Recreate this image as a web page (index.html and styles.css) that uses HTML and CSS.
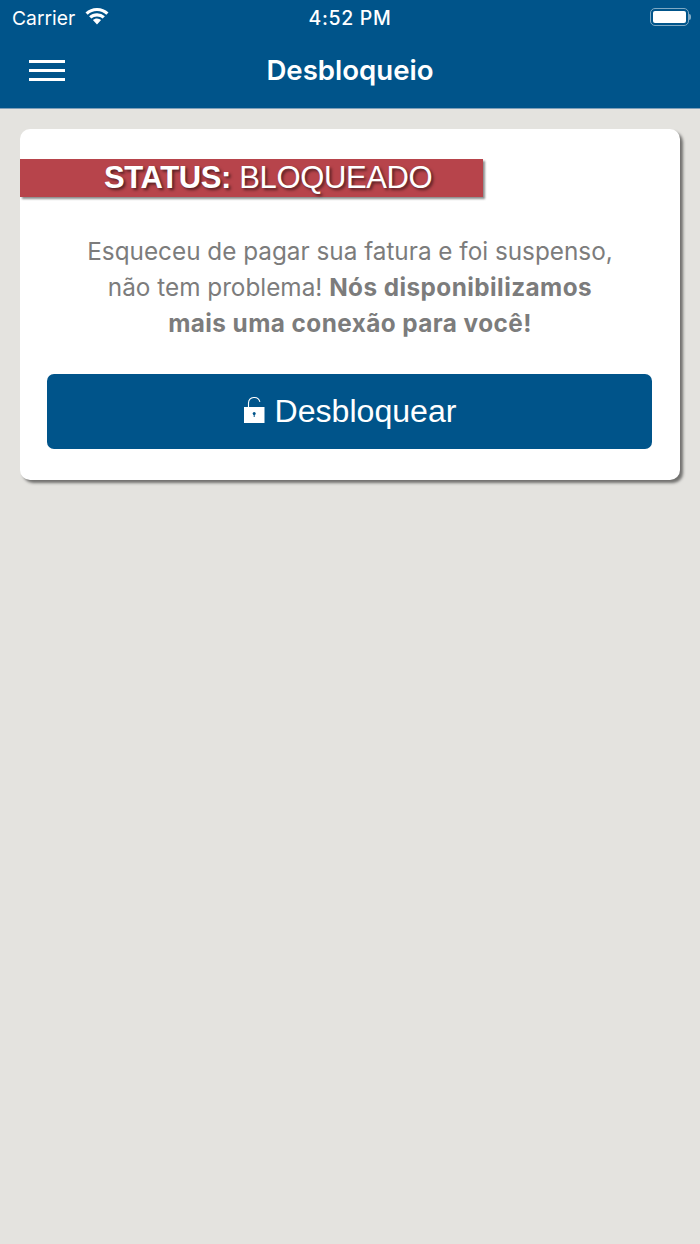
FILE: index.html
```html
<!DOCTYPE html>
<html lang="pt-BR">
<head>
<meta charset="utf-8">
<title>Desbloqueio</title>
<link rel="stylesheet" href="styles.css">
</head>
<body>
<header class="header">
  <div class="statusbar">
    <div class="status-left">
      <span class="carrier">Carrier</span>
      <svg class="wifi" width="26" height="19" viewBox="0 0 26 18"><path d="M13 3.600c3.600 0 6.900 1.400 9.300 3.700l2.200-2.300A16.500 16.500 0 0 0 13 .4 16.500 16.500 0 0 0 1.500 5l2.200 2.300A13.400 13.400 0 0 1 13 3.600z" fill="#fff"/><path d="M13 8.900c2.200 0 4.200.8 5.700 2.200l2.200-2.300A11.500 11.500 0 0 0 13 5.700c-3 0-5.800 1.200-7.900 3.100l2.200 2.300A8.400 8.400 0 0 1 13 8.900z" fill="#fff"/><path d="M13 11c-1.600 0-3 .6-4.100 1.500L13 17l4.100-4.500A6.300 6.300 0 0 0 13 11z" fill="#fff"/></svg>
    </div>
    <span class="clock">4:52 PM</span>
    <div class="battery"><span class="battery-fill"></span></div>
    <span class="battery-tip"></span>
  </div>
  <div class="navbar">
    <button class="menu" aria-label="Menu"><span></span><span></span><span></span></button>
    <h1 class="title">Desbloqueio</h1>
  </div>
</header>
<main class="content">
  <section class="card">
    <div class="ribbon"><span class="ribbon-text"><b>STATUS:</b> BLOQUEADO</span></div>
    <p class="message">Esqueceu de pagar sua fatura e foi suspenso,<br>não tem problema! <b>Nós disponibilizamos<br>mais uma conexão para você!</b></p>
    <button class="unlock">
      <svg class="lock" width="21" height="27" viewBox="0 0 21 27"><path d="M4.500 11V7a5.800 5.800 0 0 1 11.400-1.200" fill="none" stroke="#fff" stroke-width="1.100"/><path d="M0 11h20.500v16H0z" fill="#fff"/><circle cx="10.200" cy="17.500" r="1.500" fill="#00548a"/><path d="M9.700 18h1v3h-1z" fill="#00548a"/></svg>
      <span>Desbloquear</span>
    </button>
  </section>
</main>
</body>
</html>
```
FILE: styles.css
```css
* { box-sizing: border-box; }
html, body { margin: 0; padding: 0; }
body {
  width: 700px;
  height: 1244px;
  background: #e4e3df;
  font-family: "Liberation Sans", Arial, sans-serif;
  overflow: hidden;
}
.header {
  height: 109px;
  background: #00548a;
  color: #fff;
  border-bottom: 1px solid #7f9fb8;
}
.statusbar {
  height: 40px;
  padding: 0 0 0 12px;
  display: flex;
  align-items: center;
  position: relative;
}
.status-left { display: flex; align-items: center; gap: 9px; margin-top: -4px; }
.carrier { font-family: Inter, sans-serif; font-size: 19.300px; }
.wifi { margin-top: -3px; }
.clock {
  position: absolute;
  left: 0;
  right: 0;
  top: 6px;
  text-align: center;
  font-family: Inter, sans-serif;
  font-size: 19.500px;
  font-weight: 500;
  letter-spacing: 0.65px;
}
.battery {
  position: absolute;
  left: 650px;
  top: 8px;
  width: 39px;
  height: 18px;
  border: 1.500px solid #7fa9c4;
  border-radius: 5px;
  padding: 2px;
}
.battery-fill { display: block; height: 100%; background: #fff; border-radius: 2px; }
.battery-tip {
  position: absolute;
  left: 689px;
  top: 14px;
  width: 2px;
  height: 6px;
  background: #7fa9c4;
  border-radius: 0 2px 2px 0;
}
.navbar {
  height: 68px;
  position: relative;
  display: flex;
  align-items: center;
  justify-content: center;
}
.title {
  margin: -9px 0 0;
  font-family: Inter, sans-serif;
  font-size: 27.600px;
  font-weight: 600;
}
.menu {
  position: absolute;
  left: 29px;
  top: 20px;
  width: 36px;
  height: 21px;
  padding: 0;
  border: 0;
  background: none;
  display: flex;
  flex-direction: column;
  justify-content: space-between;
}
.menu span { display: block; height: 3px; background: #fff; }
.content { padding: 20px 20px; }
.card {
  width: 660px;
  height: 351px;
  background: #fff;
  border-radius: 10px;
  box-shadow: 3px 3px 3px rgba(0, 0, 0, 0.5);
  padding-top: 30px;
}
.ribbon {
  width: 463px;
  height: 38px;
  background: #b7444b;
  box-shadow: 2px 2px 2px rgba(0, 0, 0, 0.45);
  display: flex;
  align-items: center;
  padding-left: 84px;
}
.ribbon-text {
  color: #fff;
  font-size: 31px;
  letter-spacing: -0.38px;
  text-shadow: 2px 2px 3px rgba(0, 0, 0, 0.55);
  white-space: nowrap;
}
.message {
  margin: 36px 0 0;
  text-align: center;
  color: #7c7c7c;
  font-family: Inter, sans-serif;
  font-size: 24.300px;
  line-height: 36px;
}
.message b { letter-spacing: 0.45px; }
.unlock {
  margin: 33px 0 0 27px;
  width: 605px;
  height: 75px;
  border: 0;
  border-radius: 7px;
  background: #00548a;
  color: #fff;
  font-family: "Liberation Sans", Arial, sans-serif;
  font-size: 32.100px;
  display: flex;
  align-items: center;
  justify-content: center;
  gap: 10px;
  padding: 0 0 0 1px;
}
.lock { margin-top: -4px; }
```
